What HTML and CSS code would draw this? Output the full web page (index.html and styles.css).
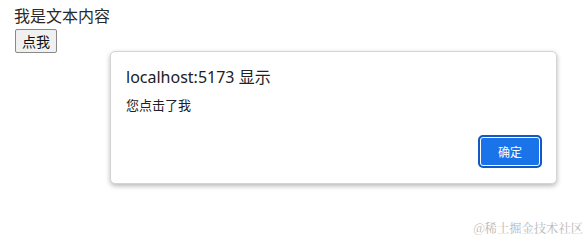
FILE: index.html
```html
<!DOCTYPE html>
<html lang="zh">
<head>
<meta charset="utf-8">
<link rel="stylesheet" href="styles.css">
</head>
<body>
  <div class="page">
    <div class="content">我是文本内容</div>
    <button class="btn">点我</button>
  </div>
  <div class="dialog">
    <div class="dialog-title">localhost:5173 显示</div>
    <div class="dialog-msg">您点击了我</div>
    <div class="dialog-actions">
      <button class="ok">确定</button>
    </div>
  </div>
  <div class="watermark">@稀土掘金技术社区</div>
</body>
</html>
```

FILE: styles.css
```css
html, body {
  margin: 0;
  padding: 0;
  background: #fff;
  width: 586px;
  height: 207px;
  overflow: hidden;
  font-family: "Noto Sans", "Noto Sans CJK SC", sans-serif;
}
.page {
  padding: 4px 0 0 14px;
}
.content {
  font-size: 16px;
  line-height: 24px;
  color: #2a2a2a;
}
.btn {
  display: block;
  margin-top: 1px;
  height: 24px;
  padding: 0 6px;
  font-family: "Noto Sans CJK SC", sans-serif;
  font-size: 14px;
  color: #111;
  background: #f0f0f0;
  border: 1px solid #8a8a8a;
  border-radius: 2px;
  margin-left: 1px;
}
.dialog {
  position: absolute;
  left: 110px;
  top: 51px;
  width: 447px;
  height: 133px;
  box-sizing: border-box;
  background: #fff;
  border: 1px solid #d4d4d4;
  border-radius: 5px;
  box-shadow: 0 2px 5px rgba(0,0,0,0.28);
  padding: 14px 14px 15px 15px;
  display: flex;
  flex-direction: column;
}
.dialog-title {
  font-size: 16px;
  line-height: 22px;
  color: #202124;
}
.dialog-msg {
  margin-top: 8px;
  font-size: 13px;
  line-height: 18px;
  color: #202124;
}
.dialog-actions {
  margin-top: auto;
  display: flex;
  justify-content: flex-end;
}
.ok {
  width: 64px;
  height: 33px;
  box-sizing: border-box;
  background: #1a73e8;
  color: #fff;
  border: 2px solid #1259c3;
  border-radius: 5px;
  box-shadow: inset 0 0 0 1px #fff;
  font-family: "Noto Sans CJK SC", sans-serif;
  font-size: 12px;
  padding: 0;
}
.watermark {
  position: absolute;
  right: 3px;
  bottom: 5px;
  font-family: "Noto Serif CJK SC", "Noto Sans CJK SC", serif;
  font-size: 12.3px;
  line-height: 14px;
  color: #b8b8b8;
}
```
